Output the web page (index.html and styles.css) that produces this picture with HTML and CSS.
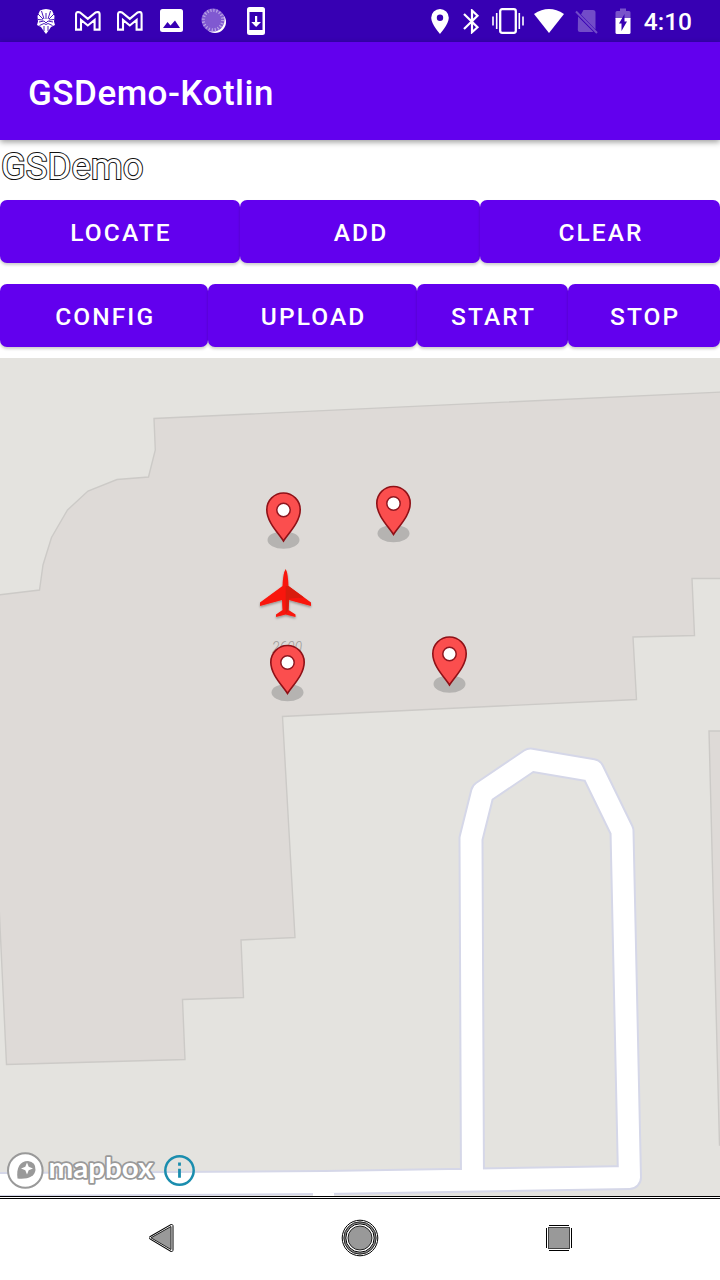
FILE: index.html
```html
<!DOCTYPE html>
<html lang="en">
<head>
<meta charset="utf-8">
<title>GSDemo-Kotlin</title>
<link rel="stylesheet" href="styles.css">
</head>
<body>
<div class="screen">
  <header class="status">
    <div class="notifications">
      <svg class="i-face" width="20" height="26" viewBox="0 0 20 26"><path d="M4 2.500Q10-.5 16 2.500L18.500 8 18 13.500 19 17 15 19 13 22 10 26 7 22 5 19 1 17 2 13.500 1.500 8Z" fill="#fff"/><path d="M10 11V5M8 11 5.500 3M12 11l2.500-8M7 11 2 6M13 11l5-5M3 14l5-1 2 2 2-2 5 1M2 11.500l5 .5M18 11.500l-5 .5M3.500 17.500l4.500-2 2 1 2-1 4.500 2M8 18v5M12 18v5" fill="none" stroke="#3700b3" stroke-width=".9"/></svg>
      <svg class="i-mail" width="26" height="20" viewBox="0 0 26 20"><path d="M1 3.500Q1 1 3.200 1L5 1.500 12.800 7.800 20.600 1.500 22.500 1Q24.600 1 24.600 3.500V18.600H19.600V9L12.800 14.500 6 9V18.600H1Z" fill="none" stroke="#fff" stroke-width="2.100" stroke-linejoin="miter"/></svg>
      <svg class="i-mail" width="26" height="20" viewBox="0 0 26 20"><path d="M1 3.500Q1 1 3.200 1L5 1.500 12.800 7.800 20.600 1.500 22.500 1Q24.600 1 24.600 3.500V18.600H19.600V9L12.800 14.500 6 9V18.600H1Z" fill="none" stroke="#fff" stroke-width="2.100" stroke-linejoin="miter"/></svg>
      <svg class="i-image" width="23" height="23" viewBox="0 0 23 23"><rect width="23" height="23" rx="2.500" fill="#fff"/><path d="M3 19 7.500 13l3 3.500L15 11.500 20 19Z" fill="#3700b3"/></svg>
      <svg class="i-dial" width="26" height="26" viewBox="0 0 26 26"><circle cx="14" cy="14" r="11" fill="#fff"/><circle cx="12" cy="12" r="11.500" fill="#8059d1"/><circle cx="12" cy="12" r="9.700" fill="none" stroke="#b8a4e6" stroke-width="3" stroke-dasharray="1.200 1.850"/></svg>
      <svg class="i-update" width="18" height="28" viewBox="0 0 18 28"><path fill-rule="evenodd" d="M2.500 0h13Q18 0 18 2.500v23Q18 28 15.500 28h-13Q0 28 0 25.500v-23Q0 0 2.500 0ZM2.500 5v18h13V5Z" fill="#fff"/><path d="M8 9h2.200v6H14l-4.900 5-4.800-5H8Z" fill="#fff"/></svg>
    </div>
    <div class="system">
      <svg class="i-place" width="18" height="25" viewBox="0 0 18 25"><path fill-rule="evenodd" d="M9 0a8.800 8.800 0 0 1 8.800 8.800C17.800 15.500 9 25 9 25S.2 15.500.2 8.800A8.800 8.800 0 0 1 9 0ZM9 5.600a3.200 3.200 0 1 0 0 6.400 3.200 3.200 0 0 0 0-6.400Z" fill="#fff"/></svg>
      <svg class="i-bt" width="17" height="25" viewBox="0 0 17 25"><path d="M1 5 14.500 18.200 9 23.200V1.500l5.500 5.300L1 20" fill="none" stroke="#fff" stroke-width="2.200"/></svg>
      <svg class="i-vibrate" width="32" height="26" viewBox="0 0 32 26"><rect x="8.200" y="1.200" width="15.600" height="23.600" rx="2" fill="none" stroke="#fff" stroke-width="2.300"/><path d="M1 8.500v9M4.700 5v16M27.300 5v16M31 8.500v9" stroke="#fff" stroke-width="1.600"/></svg>
      <svg class="i-wifi" width="30" height="24" viewBox="0 0 30 24"><path d="M0 5Q15-5 30 5L15 24Z" fill="#fff"/></svg>
      <svg class="i-sim" width="23" height="25" viewBox="0 0 23 25"><path d="M8.500 1H18q2.500 0 2.500 2.500v17L6 5.500ZM3 7.500l15.500 15.500H5q-2.200 0-2.200-2Z" fill="#724cc8"/><path d="m1 2.500 21 21.500" stroke="#724cc8" stroke-width="2"/></svg>
      <svg class="i-battery" width="16" height="26" viewBox="0 0 16 26"><path d="M.5 4.500Q.5 3 2 3h3V.500h6V3h3q1.500 0 1.500 1.500V11H.5Z" fill="#7954ca"/><path d="M.5 10h15v14.500Q15.500 26 14 26H2Q.5 26 .5 24.500Z" fill="#fff"/><path d="M9.500 6v7.500H12L6.500 23v-7.500H4Z" fill="#3700b3"/></svg>
      <span class="clock">4:10</span>
    </div>
  </header>
  <div class="appbar">GSDemo-Kotlin</div>
  <main class="content">
    <div class="label">GSDemo</div>
    <div class="row row-three"><button>LOCATE</button><button>ADD</button><button>CLEAR</button></div>
    <div class="row row-four"><button>CONFIG</button><button>UPLOAD</button><button>START</button><button>STOP</button></div>
  </main>
  <section class="map">
    <svg width="720" height="838" viewBox="0 358 720 838">
      <defs>
        <g id="pin"><ellipse cy="-1" rx="16" ry="8.700" fill="#b5b3b1"/><path d="M0 0C-5-8-16.700-19-16.700-31.300a16.700 16.700 0 0 1 33.400 0C16.700-19 5-8 0 0Z" fill="#fb4e4e" stroke="#8f1117" stroke-width="1.600"/><circle cy="-31" r="6.700" fill="#fff" stroke="#8f1720" stroke-width="1.500"/></g>
        <filter id="shade" x="-20%" y="-20%" width="140%" height="150%"><feDropShadow dx="0" dy="1.500" stdDeviation="1" flood-opacity=".35"/></filter>
      </defs>
      <g fill="#dedad7" stroke="#cccac7" stroke-width="1.400">
        <path d="M-2 595 39.500 590 43 565 51.500 537.500 67.500 510 88 491 117 479.500 148.500 477 155.300 450 154 418.500 722 392V578.500H692L694.500 635.500 633 637 636.500 699.500 282.500 716.500 295 937.500 241 940 243.500 997.500 182.500 999.500 185 1059.500 6.500 1064.500-1 905Z"/>
        <path d="M722 731H709L719.500 1145H722Z"/>
      </g>
      <g fill="none" stroke-linejoin="round">
        <path d="M-5 1184.500 325 1182.500 629.500 1177.500 622 831 592.500 770.500 530.500 760 482.500 792.500 471 838.500 472.500 1181" stroke="#d5d7e8" stroke-width="25"/>
        <path d="M-5 1184.500 325 1182.500 629.500 1177.500 622 831 592.500 770.500 530.500 760 482.500 792.500 471 838.500 472.500 1181" stroke="#fff" stroke-width="21"/>
        <path d="M313 1195h21" stroke="#fff" stroke-width="4"/>
      </g>
      <text class="house" x="287" y="653" textLength="30" lengthAdjust="spacingAndGlyphs">2600</text>
      <use href="#pin" x="283.500" y="541"/><use href="#pin" x="393.500" y="534.500"/><use href="#pin" x="287.500" y="693.500"/><use href="#pin" x="449.500" y="685"/>
      <g filter="url(#shade)"><path d="M285.700 569Q288 573 288.500 586L311 602.500V606L289 600 288.500 610 295.500 614.500V617L285.700 614.500 276 617V614.500L282.500 610 282 600 260 606V602.500L282.500 586Q283 573 285.700 569Z" fill="#f91409"/><path d="M285.700 586H288.500L304 597.500 289 598.500 288.500 610 285.700 614Z" fill="#d81c0c"/></g>
      <circle cx="25.300" cy="1170.500" r="17.300" fill="#fff" stroke="#999" stroke-width="2"/>
      <path d="M17.500 1178.500C16 1168 20 1161 28 1161q8 1 7.500 9c-1 7-8 9.500-18 8.500Z" fill="#999"/><path d="m27 1162.500 1.700 4.300 4.300 1.700-4.300 1.700-1.700 4.300-1.700-4.300-4.300-1.700 4.300-1.700Z" fill="#fff"/>
      <text class="brand" x="48.500" y="1178" textLength="105" lengthAdjust="spacingAndGlyphs">mapbox</text>
      <circle cx="179.500" cy="1170.500" r="14.200" fill="none" stroke="#1a8dae" stroke-width="2.500"/><path d="M179.500 1162.500v3.300M179.500 1168.800v9" stroke="#1a8dae" stroke-width="2.800"/>
    </svg>
  </section>
  <nav class="nav">
    <svg width="30" height="32" viewBox="0 0 30 32"><path d="M4 15.800 24.500 4v24Z" fill="#999" stroke="#000" stroke-width="4" stroke-linejoin="round"/><path d="M4 15.800 24.500 4v24Z" fill="#999" stroke="#fff" stroke-width="2"/><path d="M4 15.800 24 4.500v23Z" fill="#999" stroke="#222"/></svg>
    <svg class="i-home" width="38" height="38" viewBox="0 0 38 38"><g fill="none" stroke="#000"><circle cx="19" cy="19" r="17.800"/><circle cx="19" cy="19" r="15.300" stroke="#888" stroke-width="1.800"/><circle cx="19" cy="19" r="16.200" stroke-width=".8"/><circle cx="19" cy="19" r="14.200"/></g><circle cx="19" cy="19" r="12" fill="#999" stroke="#222"/></svg>
    <svg width="28" height="28" viewBox="0 0 28 28"><path d="M4 1.500h20M4 26.500h20M1.500 4v20M26.500 4v20" stroke="#000"/><rect x="3.500" y="3.500" width="21" height="21" fill="#999" stroke="#444"/></svg>
  </nav>
</div>
</body>
</html>
```
FILE: styles.css
```css
* { box-sizing: border-box; }
body { margin: 0; background: #fff; font-family: Roboto, "Liberation Sans", sans-serif; }
.screen { width: 720px; height: 1280px; display: flex; flex-direction: column; overflow: hidden; }
svg { display: block; flex: none; }
.status { height: 42px; flex: none; background: #3700b3; display: flex; justify-content: space-between; align-items: center; padding: 0 28px 0 35.500px; }
.notifications, .system { display: flex; align-items: center; }
.notifications { gap: 16px; }
.notifications svg { margin-top: -1px; }
.notifications .i-face { margin-right: 3px; }
.notifications .i-image { margin-right: 2px; margin-left: 1px; }
.notifications .i-dial { margin-right: 4px; }
.system { gap: 11px; }
.i-place { margin-right: 3px; }
.i-bt { margin-right: 1px; }
.i-vibrate { margin-right: -1px; }
.i-sim { margin-right: 6px; }
.i-battery { margin-right: 2px; }
.clock { color: #fff; font-size: 24.500px; font-weight: 500; line-height: 42px; padding-top: 2px; }
.appbar { height: 98px; flex: none; background: #6200ee; color: #fff; font-size: 35px; font-weight: 500; line-height: 103px; letter-spacing: .5px; padding-left: 28px; box-shadow: 0 2px 6px rgba(0,0,0,.4); z-index: 1; }
.content { height: 218px; flex: none; }
.label { height: 60.400px; font-size: 36.500px; line-height: 54px; padding-left: 1px; color: #fff; -webkit-text-stroke: 2px #111; paint-order: stroke fill; }
.row { display: grid; height: 63px; }
.row-three { grid-template-columns: repeat(3, 1fr); }
.row-four { grid-template-columns: 208.400px 208.400px 151.600px 151.600px; margin-top: 21px; }
button { border: 0; padding: 2px 0 0 2px; border-radius: 7px; background: #6200ee; color: #fff; font: 500 24.500px/61px Roboto, "Liberation Sans", sans-serif; letter-spacing: 2.100px; box-shadow: 0 2px 3px rgba(0,0,0,.2); }
.map { height: 838px; flex: none; background: #e4e3df; }
.house { font: italic 300 16px Roboto, sans-serif; fill: #9d9b98; text-anchor: middle; }
.brand { font: 700 29px Lato, sans-serif; fill: #fff; stroke: #999; stroke-width: 3.500px; stroke-linejoin: round; paint-order: stroke; }
.nav { height: 84px; flex: none; border-top: 3px double #000; display: flex; justify-content: space-between; align-items: center; padding: 0 147px 4px; }
.i-home { margin-right: 2px; }
```
